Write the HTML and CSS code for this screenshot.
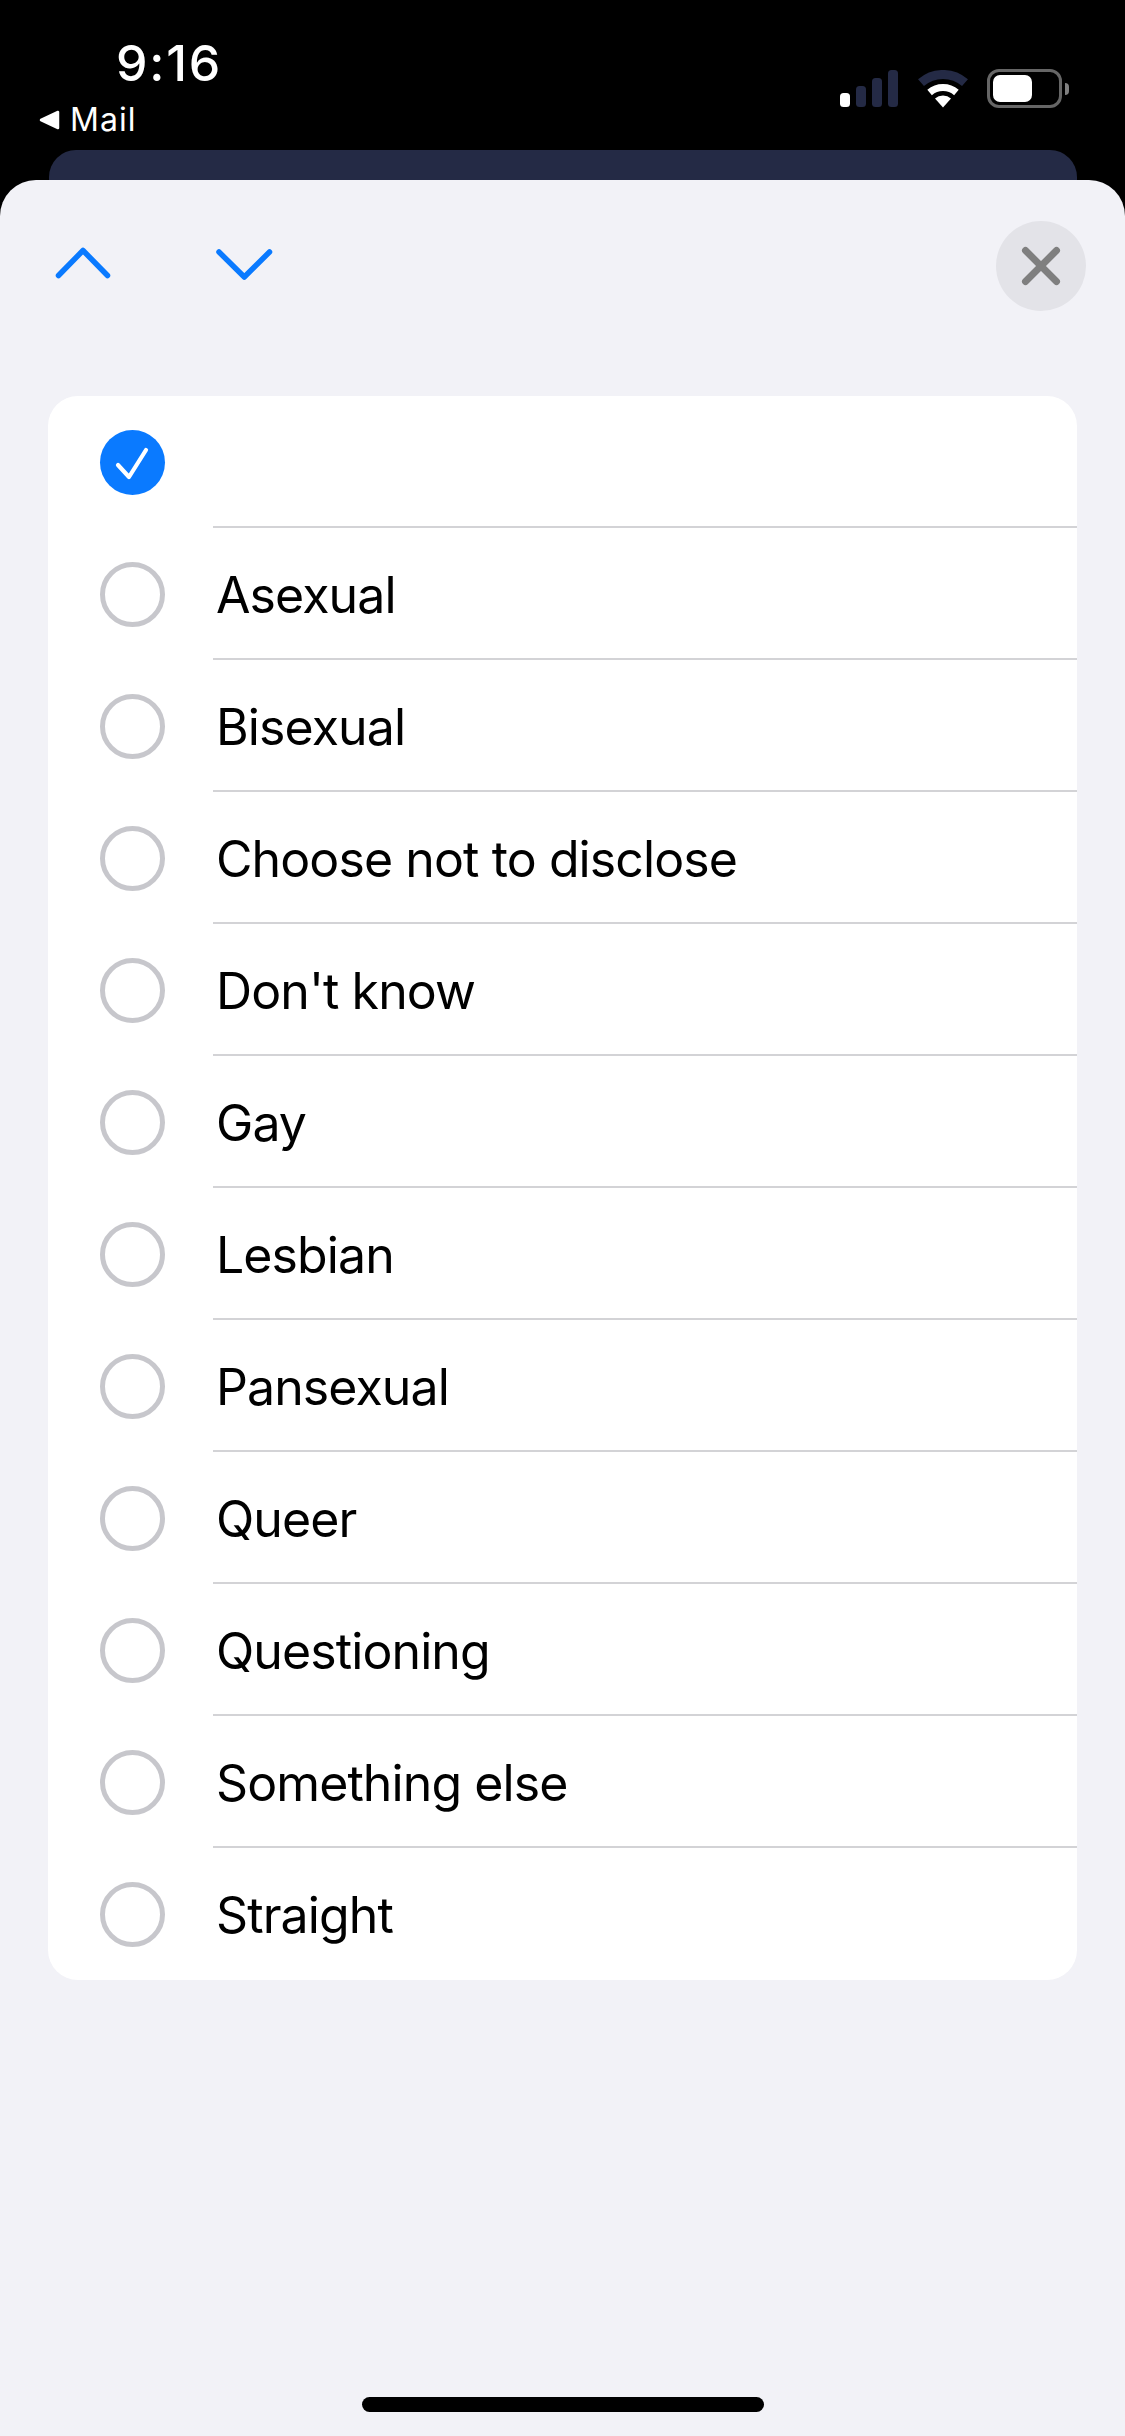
FILE: index.html
```html
<!DOCTYPE html>
<html lang="en">
<head>
<meta charset="utf-8">
<title>Options</title>
<link rel="stylesheet" href="styles.css">
</head>
<body>
<div class="screen">
  <header class="status">
    <div class="status-left">
      <div class="time">9:16</div>
      <div class="back">
        <svg class="back-arrow" viewBox="0 0 21 20" width="21" height="20"><path d="M2 10 L19 2 V18 Z" fill="#fff" stroke="#fff" stroke-width="2.5" stroke-linejoin="round"/></svg>
        <span>Mail</span>
      </div>
    </div>
    <div class="status-right">
      <svg class="signal" viewBox="0 0 58 37" width="58" height="37">
        <rect x="0" y="23" width="10" height="14" rx="3.5" fill="#fff"/>
        <rect x="16" y="16" width="10" height="21" rx="3.5" fill="#242a45"/>
        <rect x="32" y="8" width="10" height="29" rx="3.5" fill="#242a45"/>
        <rect x="48" y="0" width="10" height="37" rx="3.5" fill="#242a45"/>
      </svg>
      <svg class="wifi" viewBox="0 0 50 38" width="50" height="38">
        <path d="M3 12.7 A33.5 33.5 0 0 1 47 12.7" fill="none" stroke="#242a45" stroke-width="9"/>
        <path d="M11.6 22.5 A20.5 20.5 0 0 1 38.4 22.5" fill="none" stroke="#fff" stroke-width="7"/>
        <path d="M25 37.5 L17 28.5 A12 12 0 0 1 33 28.5 Z" fill="#fff"/>
      </svg>
      <div class="battery">
        <div class="battery-case"><div class="battery-level"></div></div>
        <div class="battery-nub"></div>
      </div>
    </div>
  </header>
  <div class="peek"></div>
  <main class="sheet">
    <div class="toolbar">
      <svg class="chevron" viewBox="0 0 60 40" width="60" height="40"><polyline points="5.5,30.5 30,5.5 54.5,30.5"/></svg>
      <svg class="chevron chevron-down" viewBox="0 0 60 40" width="60" height="40"><polyline points="5,7 30.3,32 55.5,7"/></svg>
      <button class="close" type="button" aria-label="Close">
        <svg viewBox="0 0 40 40" width="40" height="40"><path d="M4.5 4.5 L35.5 35.5 M35.5 4.5 L4.5 35.5"/></svg>
      </button>
    </div>
    <ul class="list">
      <li class="row">
        <span class="radio radio-on"><svg viewBox="0 0 65 65" width="65" height="65"><polyline points="18,35 29,47 46,20"/></svg></span>
        <span class="label"></span>
      </li>
      <li class="row"><span class="radio"></span><span class="label">Asexual</span></li>
      <li class="row"><span class="radio"></span><span class="label">Bisexual</span></li>
      <li class="row"><span class="radio"></span><span class="label">Choose not to disclose</span></li>
      <li class="row"><span class="radio"></span><span class="label">Don't know</span></li>
      <li class="row"><span class="radio"></span><span class="label">Gay</span></li>
      <li class="row"><span class="radio"></span><span class="label">Lesbian</span></li>
      <li class="row"><span class="radio"></span><span class="label">Pansexual</span></li>
      <li class="row"><span class="radio"></span><span class="label">Queer</span></li>
      <li class="row"><span class="radio"></span><span class="label">Questioning</span></li>
      <li class="row"><span class="radio"></span><span class="label">Something else</span></li>
      <li class="row"><span class="radio"></span><span class="label">Straight</span></li>
    </ul>
    <div class="home-indicator"></div>
  </main>
</div>
</body>
</html>
```
FILE: styles.css
```css
* { box-sizing: border-box; }
html, body { margin: 0; padding: 0; background: #000; }
body { font-family: Inter, "Liberation Sans", sans-serif; }
.screen { width: 1125px; height: 2436px; overflow: hidden; display: flex; flex-direction: column; background: #000; }

.status { height: 150px; flex: none; display: flex; justify-content: space-between; color: #fff; }
.status-left { padding: 34px 0 0 39px; display: flex; flex-direction: column; }
.time { font-size: 50px; line-height: 58px; font-weight: 500; margin-left: 77px; letter-spacing: 1.8px; }
.back { display: flex; align-items: center; gap: 10px; margin-top: 8px; font-size: 32px; line-height: 40px; letter-spacing: 1px; }
.back-arrow { flex: none; }
.status-right { display: flex; align-items: flex-start; padding: 70px 56px 0 0; }
.signal { margin-right: 20px; }
.wifi { margin-right: 19px; }
.battery { display: flex; align-items: center; height: 39px; margin-top: -1px; }
.battery-case { width: 75px; height: 39px; border: 3px solid #666; border-radius: 12px; padding: 3px; }
.battery-level { width: 39px; height: 27px; background: #fff; border-radius: 7px; }
.battery-nub { width: 4px; height: 12px; margin-left: 3px; background: #808080; border-radius: 0 4px 4px 0; }

.peek { height: 30px; flex: none; margin: 0 48px 0 49px; background: #242a45; border-radius: 27px 27px 0 0; }

.sheet { flex: 1; display: flex; flex-direction: column; background: #f2f2f7; border-radius: 36px 36px 0 0; }
.toolbar { height: 172px; flex: none; display: flex; align-items: center; padding: 0 39px 0 53px; margin-bottom: 44px; }
.chevron { flex: none; margin-top: -3px; fill: none; stroke: #0a7aff; stroke-width: 5.5; stroke-linecap: round; stroke-linejoin: round; }
.chevron-down { margin-left: 101px; }
.close { margin: 0 0 0 auto; padding: 0; width: 90px; height: 90px; border: 0; border-radius: 50%; background: #e3e3e8; display: flex; align-items: center; justify-content: center; }
.close svg { fill: none; stroke: #7f7f7f; stroke-width: 7; stroke-linecap: round; }

.list { list-style: none; margin: 0 48px; padding: 0; background: #fff; border-radius: 30px; }
.row { height: 132px; display: flex; align-items: center; padding-left: 52px; }
.radio { flex: none; width: 65px; height: 65px; border: 5px solid #c7c7cc; border-radius: 50%; }
.radio-on { border: 0; background: #0a7aff; }
.radio-on svg { display: block; fill: none; stroke: #fff; stroke-width: 4.2; stroke-linecap: round; stroke-linejoin: round; }
.label { flex: 1; align-self: stretch; display: flex; align-items: center; margin-left: 48px; padding: 3px 0 0 3px; border-bottom: 2px solid #d3d3d6; font-size: 50px; letter-spacing: -0.9px; color: #000; }
.row:last-child .label { border-bottom-color: transparent; }

.home-indicator { flex: none; width: 402px; height: 15px; margin: auto auto 24px; background: #000; border-radius: 8px; }
```
